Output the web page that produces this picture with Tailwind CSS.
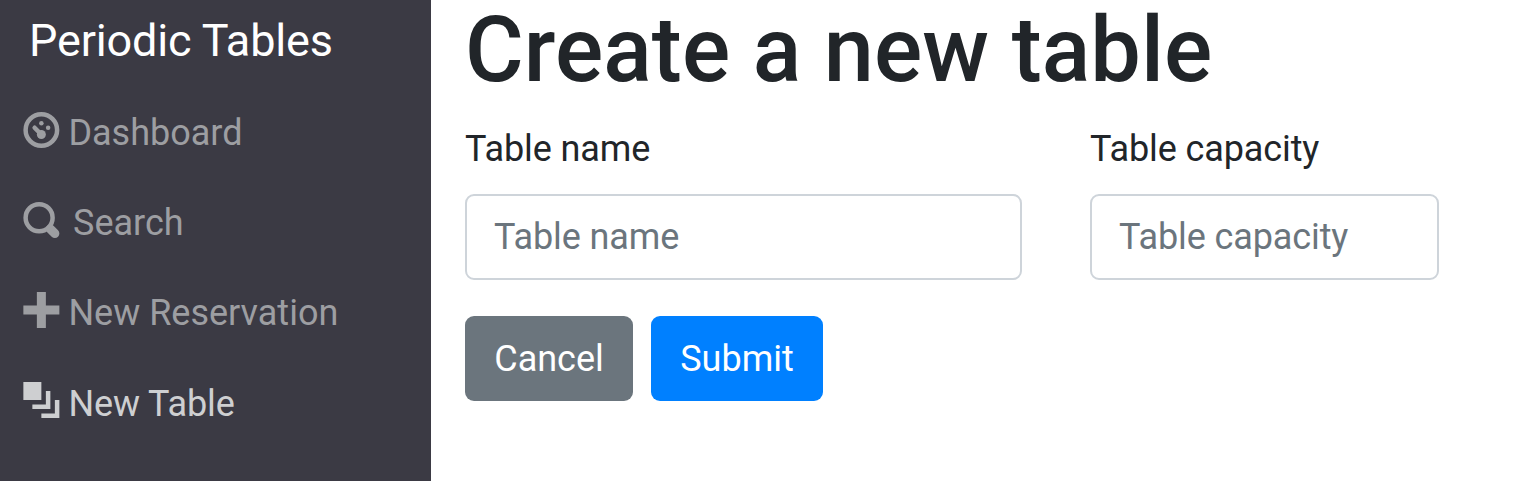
<!DOCTYPE html>
<html lang="en"><head><meta charset="utf-8"><title>Periodic Tables</title>
<script src="https://cdn.jsdelivr.net/npm/@tailwindcss/browser@4"></script></head>
<body class="flex h-[481px] overflow-hidden bg-white font-['Roboto',sans-serif] text-[36px] leading-[54px] text-[#212529]">
<nav class="w-[431px] shrink-0 bg-[#3b3a44] whitespace-nowrap">
<div class="h-[83px] pl-[29px] pt-[14px] text-[45px] leading-[54px] tracking-[-0.15px] text-white">Periodic Tables</div>
<ul class="text-[#9d9ea2]">
<li class="flex h-[90px] items-center pl-[23px] pt-[9px]"><svg class="mr-[8.4px] mb-[5px] h-9 w-[37px] shrink-0" viewBox="-0.08 0 8.22 8" fill="currentColor"><circle cx="4" cy="4" r="3.5" fill="none" stroke="currentColor"/><circle cx="4" cy="2.5" r=".5"/><circle cx="5.5" cy="3.5" r=".5"/><circle cx="4" cy="5" r="1"/><path d="M2.5 3.5L4 5" stroke="currentColor" stroke-linecap="round"/></svg><span class="pt-px">Dashboard</span></li>
<li class="flex h-[90px] items-center pl-[23px] pt-[9px]"><svg class="mr-[13px] mb-[5px] h-9 w-[37px] shrink-0" viewBox="-0.08 0 8.22 8" fill="none" stroke="currentColor"><circle cx="3.5" cy="3.5" r="3"/><path d="M6 6l1 1" stroke-width="2" stroke-linecap="round"/></svg><span class="pt-px">Search</span></li>
<li class="flex h-[90px] items-center pl-[23px] pt-[9px]"><svg class="mr-[8.4px] mb-[5px] h-9 w-[37px] shrink-0" viewBox="-0.08 0 8.22 8" fill="currentColor"><path d="M3 0v3h-3v2h3v3h2v-3h3v-2h-3v-3h-2z"/></svg><span class="pt-px">New Reservation</span></li>
<li class="flex h-[90px] items-center pl-[23px] pt-[9px] text-[#cecfd1]"><svg class="mr-[8.4px] mb-[5px] h-9 w-[37px] shrink-0" viewBox="-0.08 0 8.22 8" fill="currentColor"><path d="M0 0v4h4v-4h-4zm5 2v3h-3v1h4v-4h-1zm2 2v3h-3v1h4v-4h-1z"/></svg><span class="pt-[3px] tracking-[-0.1px]">New Table</span></li>
</ul></nav>
<main class="flex-1 pl-[34px] whitespace-nowrap">
<h1 class="h-[122px] text-[90px] leading-[101px] font-medium tracking-[0.1px]">Create a new table</h1>
<form>
<div class="flex gap-[68px]">
<label class="block w-[557px]"><span class="block h-[72px] tracking-[-0.1px]">Table name</span><input placeholder="Table name" class="block h-[86px] w-full rounded-[9px] border-2 border-[#ced4da] px-[27px] tracking-[-0.1px] placeholder:text-[#6b757d]"></label>
<label class="block w-[349px]"><span class="block h-[72px] tracking-[-0.1px]">Table capacity</span><input placeholder="Table capacity" class="block h-[86px] w-full rounded-[9px] border-2 border-[#ced4da] px-[27px] tracking-[-0.1px] placeholder:text-[#6b757d]"></label>
</div>
<div class="mt-9 flex gap-[18px] text-white"><button type="button" class="h-[85px] w-[168px] rounded-[9px] bg-[#6b757d]">Cancel</button><button type="submit" class="h-[85px] w-[172px] rounded-[9px] bg-[#0080ff]">Submit</button></div>
</form></main></body></html>
